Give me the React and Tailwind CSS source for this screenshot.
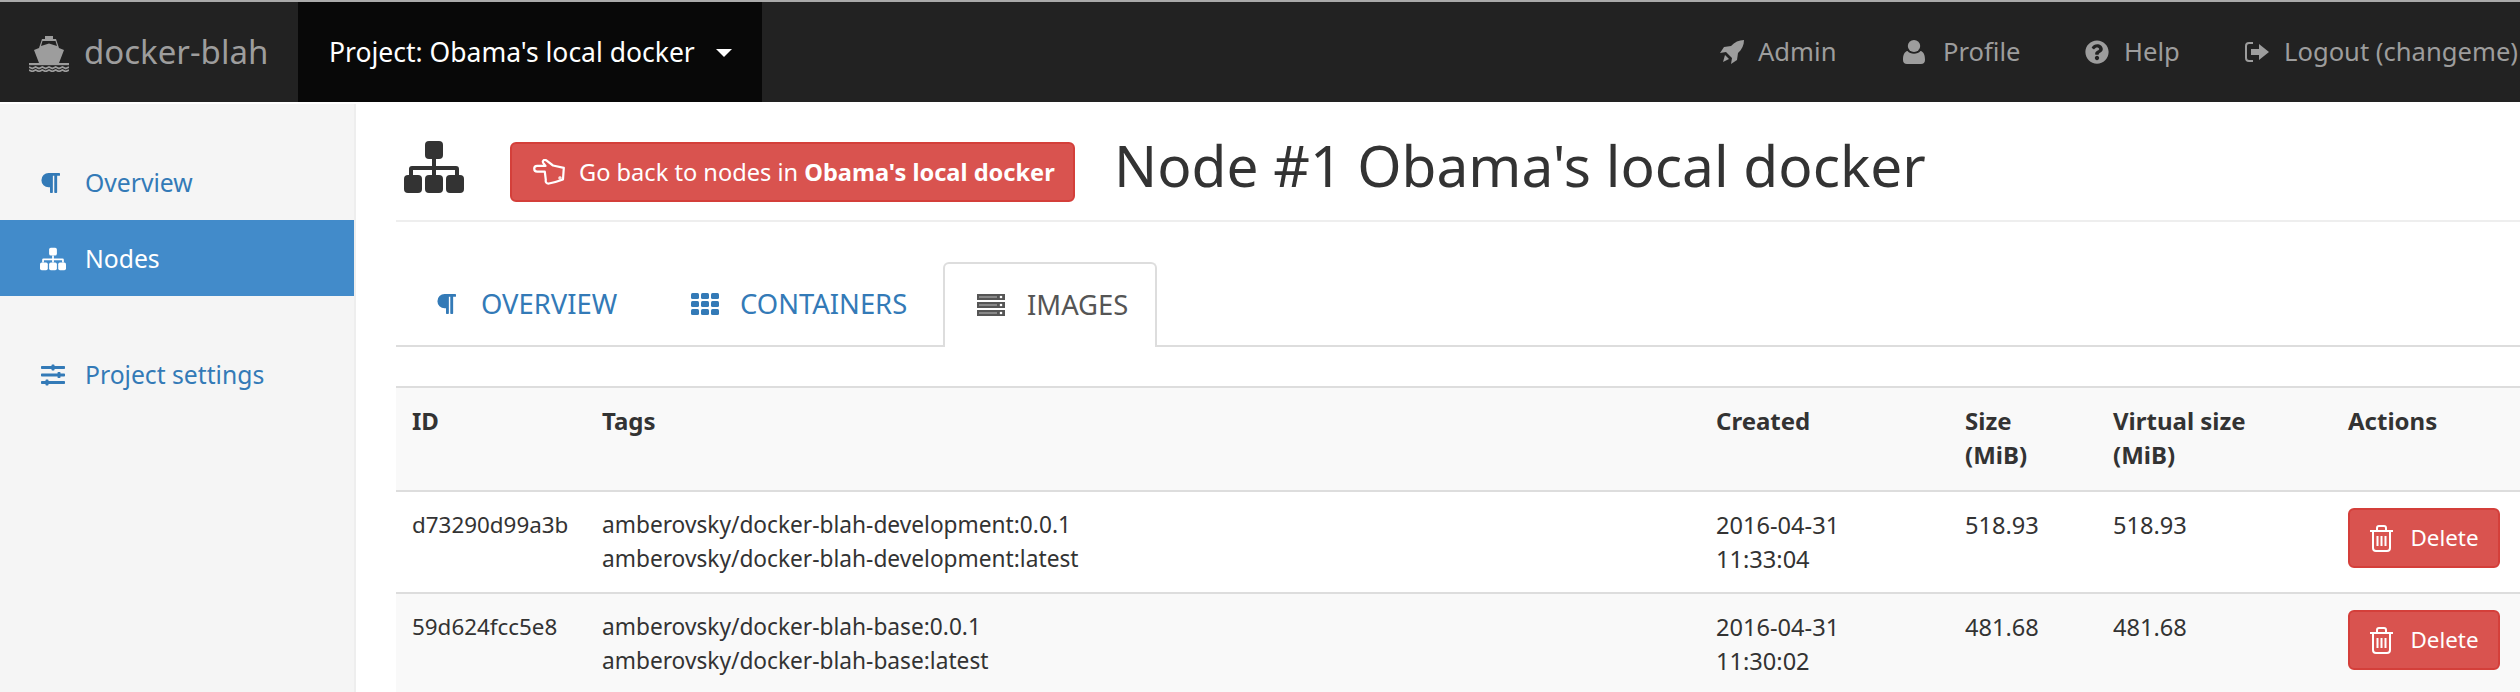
import { FaParagraph, FaQuestionCircle, FaSlidersH } from "react-icons/fa";

function ShipIcon({ className }) {
  return (
    <svg viewBox="0 0 40 36" className={className} fill="currentColor">
      <path d="M16 0h8v3h3l3 9 5 2-5 13H10L5 14l5-2 3-9h3z" />
      <path fill="#222" d="M13.500 5h13l1.500 5-8-2.500L12 10z" />
      <rect x="0" y="27" width="40" height="2.200" />
      <path
        fill="none"
        stroke="currentColor"
        strokeWidth="1.800"
        d="M0 31l3.300 1.500 3.300-1.500 3.400 1.500 3.300-1.500 3.400 1.500 3.300-1.500 3.300 1.500 3.400-1.500 3.300 1.500 3.400-1.500 3.300 1.500 3.300-1.500M0 34l3.300 1.500 3.300-1.500 3.400 1.500 3.300-1.500 3.400 1.500 3.300-1.500 3.300 1.500 3.400-1.500 3.300 1.500 3.400-1.500 3.300 1.500 3.300-1.500"
      />
    </svg>
  );
}

function SitemapIcon({ className }) {
  return (
    <svg viewBox="0 0 60 52" className={className} fill="currentColor">
      <rect x="21" y="0" width="18" height="18" rx="4" />
      <rect x="0" y="34" width="18" height="18" rx="4" />
      <rect x="21" y="34" width="18" height="18" rx="4" />
      <rect x="42" y="34" width="18" height="18" rx="4" />
      <path d="M28 18h4v7h20a3 3 0 0 1 3 3v6h-4v-5H32v5h-4v-5H9v5H5v-6a3 3 0 0 1 3-3h20z" />
    </svg>
  );
}

function ThIcon({ className }) {
  const cells = [0, 1, 2, 3, 4, 5, 6, 7, 8];
  return (
    <svg viewBox="0 0 28 22" className={className} fill="currentColor">
      {cells.map((c) => (
        <rect key={c} x={(c % 3) * 10} y={Math.floor(c / 3) * 8} width="8" height="6" rx="1.500" />
      ))}
    </svg>
  );
}

function ServerIcon({ className }) {
  const rows = [0, 8, 16];
  return (
    <svg viewBox="0 0 28 22" className={className}>
      {rows.map((y) => (
        <g key={y}>
          <rect x="0" y={y} width="28" height="6" fill="currentColor" />
          <rect x="2" y={y + 2.5} width="18" height="1" fill="#bbb" />
          <circle cx="24" cy={y + 3} r="1.300" fill="#fff" />
        </g>
      ))}
    </svg>
  );
}

function RocketIcon({ className }) {
  return (
    <svg viewBox="0 0 24 24" className={className} fill="currentColor">
      <path d="M24 0C19 0 14.500 2 11 6L4 7 0 13l6-1 6 6-1 6 6-4 1-7c4-3.500 6-8 6-13z" />
      <path d="M5 15l4 4-4 2-2 1z" />
    </svg>
  );
}

function UserIcon({ className }) {
  return (
    <svg viewBox="0 0 22 24" className={className} fill="currentColor">
      <ellipse cx="11" cy="6" rx="6.200" ry="6" />
      <path d="M4.500 11C6 12.800 8.300 13.800 11 13.800s5-1 6.500-2.800c3 .6 4.500 3.500 4.500 9 0 2.700-1.500 4-4 4H4c-2.500 0-4-1.300-4-4 0-5.500 1.500-8.400 4.500-9z" />
    </svg>
  );
}

function LogoutIcon({ className }) {
  return (
    <svg viewBox="0 0 24 20" className={className} fill="currentColor">
      <path d="M8 0v2H4a2 2 0 0 0-2 2v12a2 2 0 0 0 2 2h4v2H4a4 4 0 0 1-4-4V4a4 4 0 0 1 4-4z" />
      <path d="M14 2l10 8-10 8v-5H6V7h8z" />
    </svg>
  );
}

function HandIcon({ className }) {
  return (
    <svg viewBox="0 0 32 26" className={className} fill="none" stroke="currentColor" strokeWidth="2.200" strokeLinejoin="round">
      <path d="M1.200 9.800c0-1.800 1.500-2.900 3-2.900h8.300L10.200 3.800C9 2 11 .2 13 1.200l7 5.300 10.800 2.300-.8 11.700c-4 1.500-9 3-14 4-2.500.3-3.700-1.500-3.200-3.500l-1-8.300H4.200c-1.700 0-3-1.200-3-3.200z" />
      <circle cx="27" cy="19" r=".6" />
    </svg>
  );
}

function TrashIcon({ className }) {
  return (
    <svg viewBox="0 0 25 27" className={className} fill="none" stroke="currentColor" strokeWidth="2">
      <path d="M1 6h23M8 6V3a2 2 0 0 1 2-2h5a2 2 0 0 1 2 2v3M4 6v17a3 3 0 0 0 3 3h11a3 3 0 0 0 3-3V6M8.500 11v10M12.500 11v10M16.500 11v10" />
    </svg>
  );
}

function NavLink({ icon, label, className }) {
  return (
    <a className={`flex items-center whitespace-nowrap text-[25.6px] text-[#9d9d9d] ${className}`}>
      {icon}
      {label}
    </a>
  );
}

function SideLink({ icon, label, active }) {
  return (
    <a className={`flex h-[76px] items-center pl-[40px] pt-[1px] text-[24.7px] ${active ? "bg-[#428bca] text-white" : "text-[#337ab7]"}`}>
      <span className="flex w-[45px] shrink-0">{icon}</span>
      {label}
    </a>
  );
}

function Tab({ icon, label, active, className }) {
  return (
    <a
      className={`flex items-center whitespace-nowrap text-[27.4px] ${
        active
          ? "mb-[-2px] h-[85px] rounded-t-[6px] border-2 border-b-0 border-[#ddd] bg-white pb-[2px] text-[#555]"
          : "h-[83px] text-[#337ab7]"
      } ${className}`}
    >
      {icon}
      {label}
    </a>
  );
}

function DeleteButton() {
  return (
    <button className="flex h-[60px] w-[152px] items-center justify-center gap-[16px] rounded-[6px] border-2 border-[#d43f3a] bg-[#d9534f] text-[22.4px] text-white">
      <TrashIcon className="h-[27px] w-[25px]" />
      Delete
    </button>
  );
}

const images = [
  {
    id: "d73290d99a3b",
    tags: ["amberovsky/docker-blah-development:0.0.1", "amberovsky/docker-blah-development:latest"],
    created: ["2016-04-31", "11:33:04"],
    size: "518.93",
  },
  {
    id: "59d624fcc5e8",
    tags: ["amberovsky/docker-blah-base:0.0.1", "amberovsky/docker-blah-base:latest"],
    created: ["2016-04-31", "11:30:02"],
    size: "481.68",
  },
];

export default function App() {
  return (
    <div className="h-[692px] w-[2520px] overflow-hidden bg-white font-['Noto_Sans',sans-serif] text-[24px] leading-[34px] text-[#333]">
      <div className="flex h-[102px] items-stretch border-t-2 border-[#aaa] bg-[#222]">
        <div className="flex w-[298px] items-center pl-[29px] text-[33px] text-[#9d9d9d]">
          <ShipIcon className="mr-[15px] mt-[4px] h-[36px] w-[40px]" />
          docker-blah
        </div>
        <div className="flex w-[464px] items-center bg-[#080808] pl-[31px] text-[26.5px] text-white">
          Project: Obama's local docker
          <span className="ml-[21px] mt-[2px] border-x-[8px] border-t-[8px] border-x-transparent border-t-white" />
        </div>
        <div className="ml-[958px] flex items-center">
          <NavLink className="w-[183px]" icon={<RocketIcon className="mr-[14px] h-[24px] w-[24px]" />} label="Admin" />
          <NavLink className="w-[182px]" icon={<UserIcon className="mr-[18px] h-[24px] w-[22px]" />} label="Profile" />
          <NavLink className="w-[160px]" icon={<FaQuestionCircle className="mr-[15px] h-[24px] w-[24px]" />} label="Help" />
          <NavLink icon={<LogoutIcon className="mr-[15px] h-[20px] w-[24px]" />} label="Logout (changeme)" />
        </div>
      </div>

      <div className="flex h-[590px]">
        <div className="mt-[2px] w-[356px] shrink-0 border-r-2 border-[#eee] bg-[#f5f5f5] pt-[40px]">
          <SideLink icon={<FaParagraph className="h-[24px] w-[20px]" />} label="Overview" />
          <SideLink active icon={<SitemapIcon className="h-[24px] w-[26px]" />} label="Nodes" />
          <div className="h-[40px]" />
          <SideLink icon={<FaSlidersH className="h-[24px] w-[26px]" />} label="Project settings" />
        </div>

        <div className="min-w-0 flex-1 pl-[40px]">
          <div className="flex h-[120px] items-start border-b-2 border-[#eee] pl-[8px] pt-[38px]">
            <SitemapIcon className="mt-[1px] h-[52px] w-[60px] text-[#333]" />
            <button className="ml-[46px] mt-[2px] flex h-[60px] w-[565px] items-center rounded-[6px] border-2 border-[#d43f3a] bg-[#d9534f] pl-[21px] text-[23.6px] text-white">
              <HandIcon className="mr-[14px] h-[26px] w-[32px]" />
              <span>
                Go back to nodes in <b>Obama's local docker</b>
              </span>
            </button>
            <h1 className="ml-[39px] mt-[-8px] whitespace-nowrap text-[56.8px] leading-[66px] font-normal">Node #1 Obama's local docker</h1>
          </div>

          <div className="mt-[40px] flex h-[85px] items-end border-b-2 border-[#ddd]">
            <Tab className="w-[286px] pl-[40px]" icon={<FaParagraph className="mr-[25px] h-[24px] w-[20px]" />} label="OVERVIEW" />
            <Tab className="w-[261px] pl-[9px]" icon={<ThIcon className="mr-[21px] h-[22px] w-[28px]" />} label="CONTAINERS" />
            <Tab active className="w-[214px] pl-[32px]" icon={<ServerIcon className="mr-[22px] h-[22px] w-[28px]" />} label="IMAGES" />
          </div>

          <table className="mt-[39px] w-full table-fixed border-t-2 border-[#ddd]">
            <thead>
              <tr className="bg-[#f9f9f9] align-top">
                <th className="w-[190px] px-[16px] pb-[18px] pt-[16px] text-left font-bold">ID</th>
                <th className="w-[1114px] px-[16px] pb-[18px] pt-[16px] text-left font-bold">Tags</th>
                <th className="w-[249px] px-[16px] pb-[18px] pt-[16px] text-left font-bold">Created</th>
                <th className="w-[148px] px-[16px] pb-[18px] pt-[16px] text-left font-bold">
                  Size
                  <br />
                  (MiB)
                </th>
                <th className="w-[235px] px-[16px] pb-[18px] pt-[16px] text-left font-bold">
                  Virtual size
                  <br />
                  (MiB)
                </th>
                <th className="px-[16px] pb-[18px] pt-[16px] text-left font-bold">Actions</th>
              </tr>
            </thead>
            <tbody>
              {images.map((image, i) => (
                <tr key={image.id} className={`border-t-2 border-[#ddd] align-top ${i % 2 ? "bg-[#f9f9f9]" : "bg-white"}`}>
                  <td className="p-[16px] text-[22.4px]">{image.id}</td>
                  <td className="p-[16px] text-[22.7px]">
                    {image.tags.map((tag) => (
                      <div key={tag}>{tag}</div>
                    ))}
                  </td>
                  <td className="p-[16px] text-[23.6px]">
                    {image.created.map((part) => (
                      <div key={part}>{part}</div>
                    ))}
                  </td>
                  <td className="p-[16px] text-[23.6px]">{image.size}</td>
                  <td className="p-[16px] text-[23.6px]">{image.size}</td>
                  <td className="p-[16px]">
                    <DeleteButton />
                  </td>
                </tr>
              ))}
            </tbody>
          </table>
        </div>
      </div>
    </div>
  );
}
